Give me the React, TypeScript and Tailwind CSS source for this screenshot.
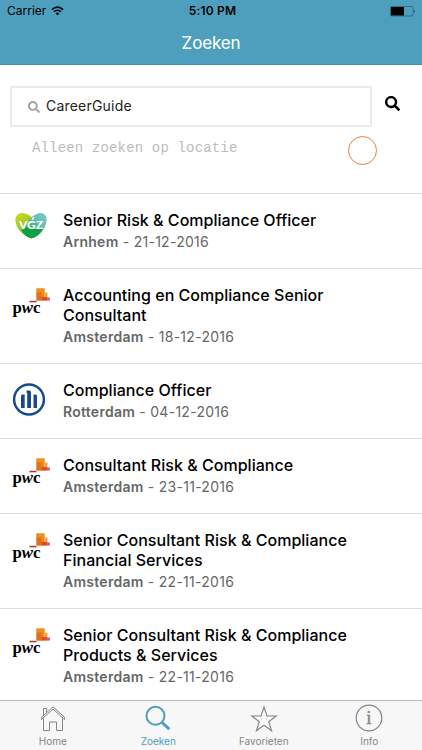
import { useState } from "react";
import { FaSearch } from "react-icons/fa";

interface Job {
  id: number;
  company: "vgz" | "pwc" | "allianz";
  title: string[];
  city: string;
  date: string;
}

const jobs: Job[] = [
  { id: 1, company: "vgz", title: ["Senior Risk & Compliance Officer"], city: "Arnhem", date: "21-12-2016" },
  { id: 2, company: "pwc", title: ["Accounting en Compliance Senior", "Consultant"], city: "Amsterdam", date: "18-12-2016" },
  { id: 3, company: "allianz", title: ["Compliance Officer"], city: "Rotterdam", date: "04-12-2016" },
  { id: 4, company: "pwc", title: ["Consultant Risk & Compliance"], city: "Amsterdam", date: "23-11-2016" },
  { id: 5, company: "pwc", title: ["Senior Consultant Risk & Compliance", "Financial Services"], city: "Amsterdam", date: "22-11-2016" },
  { id: 6, company: "pwc", title: ["Senior Consultant Risk & Compliance", "Products & Services"], city: "Amsterdam", date: "22-11-2016" },
];

const tabs = ["Home", "Zoeken", "Favorieten", "Info"];

function VgzLogo() {
  return (
    <svg width="40" height="32" viewBox="0 0 40 32">
      <defs>
        <linearGradient id="vgz-left" x1="0" y1="0" x2="0.6" y2="1">
          <stop offset="0" stopColor="#d3dc1c" />
          <stop offset="1" stopColor="#5fb62f" />
        </linearGradient>
        <linearGradient id="vgz-right" x1="1" y1="0" x2="0.2" y2="1">
          <stop offset="0" stopColor="#6fc3c8" />
          <stop offset="0.6" stopColor="#45b59a" />
          <stop offset="1" stopColor="#109a48" />
        </linearGradient>
      </defs>
      <g transform="translate(-0.500 -2.800)">
        <path d="M20 28C12 26 5 19 4 11C3 5 8 2 13 3C17 4 20 6 22 9L31 20C28 25 24 27 20 28Z" fill="url(#vgz-left)" />
        <path d="M20 28C28 26 34 19 35 11C36 5 32 2 27 3C23 4 19 7 16 12L10 20C12 24 16 27 20 28Z" fill="url(#vgz-right)" fillOpacity="0.9" />
        <path d="M10 20C15 16 25 16 31 19C28 24 24 27 20 28C16 27 12 24 10 20Z" fill="#0da044" />
        <text x="19.500" y="19.300" textAnchor="middle" fill="white" fontSize="12" fontWeight="900" fontFamily="Lato, sans-serif" textLength="24" lengthAdjust="spacingAndGlyphs">
          VGZ
        </text>
        <path d="M20.500 9.500l1.800-2.500" stroke="white" strokeWidth="1.500" />
      </g>
    </svg>
  );
}

function PwcLogo() {
  return (
    <svg width="40" height="32" viewBox="0 0 40 32">
      <g transform="translate(0 0.500)">
        <path d="M24.500 0h8v12h-8z" fill="#e88a1a" />
        <path d="M24.500 0h8v4h-8z" fill="#ee8f20" />
        <path d="M32.500 4h3v8h-3z" fill="#f3a33c" />
        <path d="M35 9h3v3h-3z" fill="#df5b7d" />
        <path d="M24.500 4h5v8h-5z" fill="#e2701f" />
        <path d="M29.500 8.500h5.500v3.500h-5.500z" fill="#dd4a2a" />
        <path d="M17.500 12.300h7v1.500h-7z" fill="#a8322a" />
      </g>
      <text x="0.500" y="25.300" fill="black" fontSize="16.500" fontWeight="700" fontFamily="'Liberation Serif', serif" textLength="28" lengthAdjust="spacingAndGlyphs">
        p<tspan fontStyle="italic">w</tspan>c
      </text>
    </svg>
  );
}

function AllianzLogo() {
  return (
    <svg width="40" height="34" viewBox="0 0 40 34">
      <circle cx="17" cy="16.500" r="14.900" fill="white" stroke="#174a8b" strokeWidth="2.500" />
      <path d="M10 11.500h2.700v13.500H9V13Q9 11.500 10 11.500ZM14.500 7.500H17.300Q19 7.500 19 9v16H15.200V9.800h-.7ZM21.500 11.500H23.500q1.500 0 1.500 1.500v12h-3.500Z" fill="#174a8b" />
    </svg>
  );
}

function CompanyLogo({ company }: { company: Job["company"] }) {
  if (company === "vgz") return <VgzLogo />;
  if (company === "allianz") return <AllianzLogo />;
  return <PwcLogo />;
}

function StatusBar() {
  return (
    <div className="flex h-[22px] items-center pl-[7px] pr-1.5 text-black">
      <div className="flex flex-1 items-center gap-[5px] text-[12px]">
        <span>Carrier</span>
        <svg width="13" height="10" viewBox="0 0 14 10" fill="none" stroke="black" strokeWidth="1.700">
          <path d="M1 3.500Q7-1.700 13 3.500M3.200 5.800Q7 2.500 10.800 5.800" />
          <path d="M4.900 7.400Q7 5.600 9.100 7.400L7 9.700Z" fill="black" stroke="none" />
        </svg>
      </div>
      <span className="pl-[2px] text-[12px] font-semibold tracking-[0.2px]">5:10 PM</span>
      <div className="flex flex-1 justify-end">
        <svg width="27" height="11" viewBox="0 0 27 11">
          <rect x="1.500" y="0.500" width="22.500" height="9.500" rx="1" fill="none" stroke="#27596b" strokeWidth="0.700" />
          <rect x="2" y="1" width="13" height="8.500" fill="black" />
          <path d="M25 3.700q1.300 1.500 0 3Z" fill="black" />
        </svg>
      </div>
    </div>
  );
}

function TabIcon({ name }: { name: string }) {
  return (
    <svg width="30" height="30" viewBox="0 0 30 30" fill="none" stroke="currentColor" strokeWidth="1">
      {name === "Home" && (
        <path d="M3.500 15.500L15 5l11.500 10.500v-2.200L15 2.800 3.500 13.300ZM5.500 14.500V26.500h6V18h7v8.500h6V14.500M5.500 11.300V4.500h3v4" />
      )}
      {name === "Zoeken" && (
        <>
          <circle cx="12.500" cy="11.800" r="9" strokeWidth="2" />
          <path d="M19 18.500l7.300 6.700" strokeWidth="3" />
        </>
      )}
      {name === "Favorieten" && (
        <path d="M15 3l3 9h9.300l-7.600 5.700 2.900 9.100-7.600-5.600-7.600 5.600 2.900-9.100L2.700 12H12Z" strokeWidth="1.100" />
      )}
      {name === "Info" && (
        <>
          <circle cx="15" cy="14" r="12.800" strokeWidth="1.200" />
          <text x="15" y="20" textAnchor="middle" fill="currentColor" stroke="currentColor" strokeWidth="0.400" fontSize="19" fontFamily="'Liberation Serif', serif">
            i
          </text>
        </>
      )}
    </svg>
  );
}

export default function App() {
  const [query, setQuery] = useState("CareerGuide");
  const [activeTab, setActiveTab] = useState("Zoeken");

  return (
    <div className="flex h-[750px] w-[422px] flex-col overflow-hidden bg-white font-['Inter',sans-serif]">
      {/* Header */}
      <header className="h-[65px] shrink-0 border-b border-[#4690ad] bg-[#4e9fbe]">
        <StatusBar />
        <h1 className="text-center text-[17px] leading-[43px] tracking-[-0.15px] text-white">Zoeken</h1>
      </header>

      {/* Search */}
      <section className="h-[129px] shrink-0 border-b border-[#dedede] pt-[21px] pl-[10px]">
        <div className="flex">
          <label className="flex h-[41px] w-[362px] items-center gap-[6px] border-2 border-[#ebebeb] pl-[16px]">
            <FaSearch className="size-[12px] text-[#a3a3a3]" />
            <input
              value={query}
              onChange={(e) => setQuery(e.target.value)}
              className="mb-[2px] w-[290px] text-[14px] tracking-[0.2px] text-[#222] outline-none"
            />
          </label>
          <button className="ml-[13px] mt-[10px] size-[15px]">
            <FaSearch className="size-[15px] text-black" />
          </button>
        </div>
        <div className="flex pl-[22px] pt-[9px]">
          <span className="w-[316px] pt-[3px] font-['Liberation_Mono',monospace] text-[14px] leading-[18px] tracking-[0.16px] text-[#bcbcbc]">
            Alleen zoeken op locatie
          </span>
          <button className="size-[29px] rounded-full border border-[#e8803c]" />
        </div>
      </section>

      {/* Results */}
      <main className="min-h-0 flex-1 overflow-hidden">
        {jobs.map((job) => (
          <article key={job.id} className="flex border-b border-[#dedede] pt-[16px] pb-[17px] pl-3">
            <div className="mt-[3px] h-[34px] w-[51px]">
              <CompanyLogo company={job.company} />
            </div>
            <div>
              <h2 className="text-[16px] leading-[20px] font-medium tracking-[0.03px] text-black">
                {job.title.map((line) => (
                  <span key={line} className="block">{line}</span>
                ))}
              </h2>
              <p className="mt-[2px] text-[14px] leading-[19px] tracking-[0.27px] text-[#666]">
                <b className="font-semibold">{job.city}</b> - {job.date}
              </p>
            </div>
          </article>
        ))}
      </main>

      {/* Tab bar */}
      <nav className="flex h-[50px] shrink-0 border-t border-[#bdbdbd] bg-[#f7f7f7]">
        {tabs.map((tab) => (
          <button
            key={tab}
            onClick={() => setActiveTab(tab)}
            className={`flex flex-1 flex-col items-center pt-[3px] text-[10px] leading-[14px] ${
              tab === activeTab ? "text-[#4e9fbe]" : "text-[#858585]"
            }`}
          >
            <TabIcon name={tab} />
            {tab}
          </button>
        ))}
      </nav>
    </div>
  );
}
